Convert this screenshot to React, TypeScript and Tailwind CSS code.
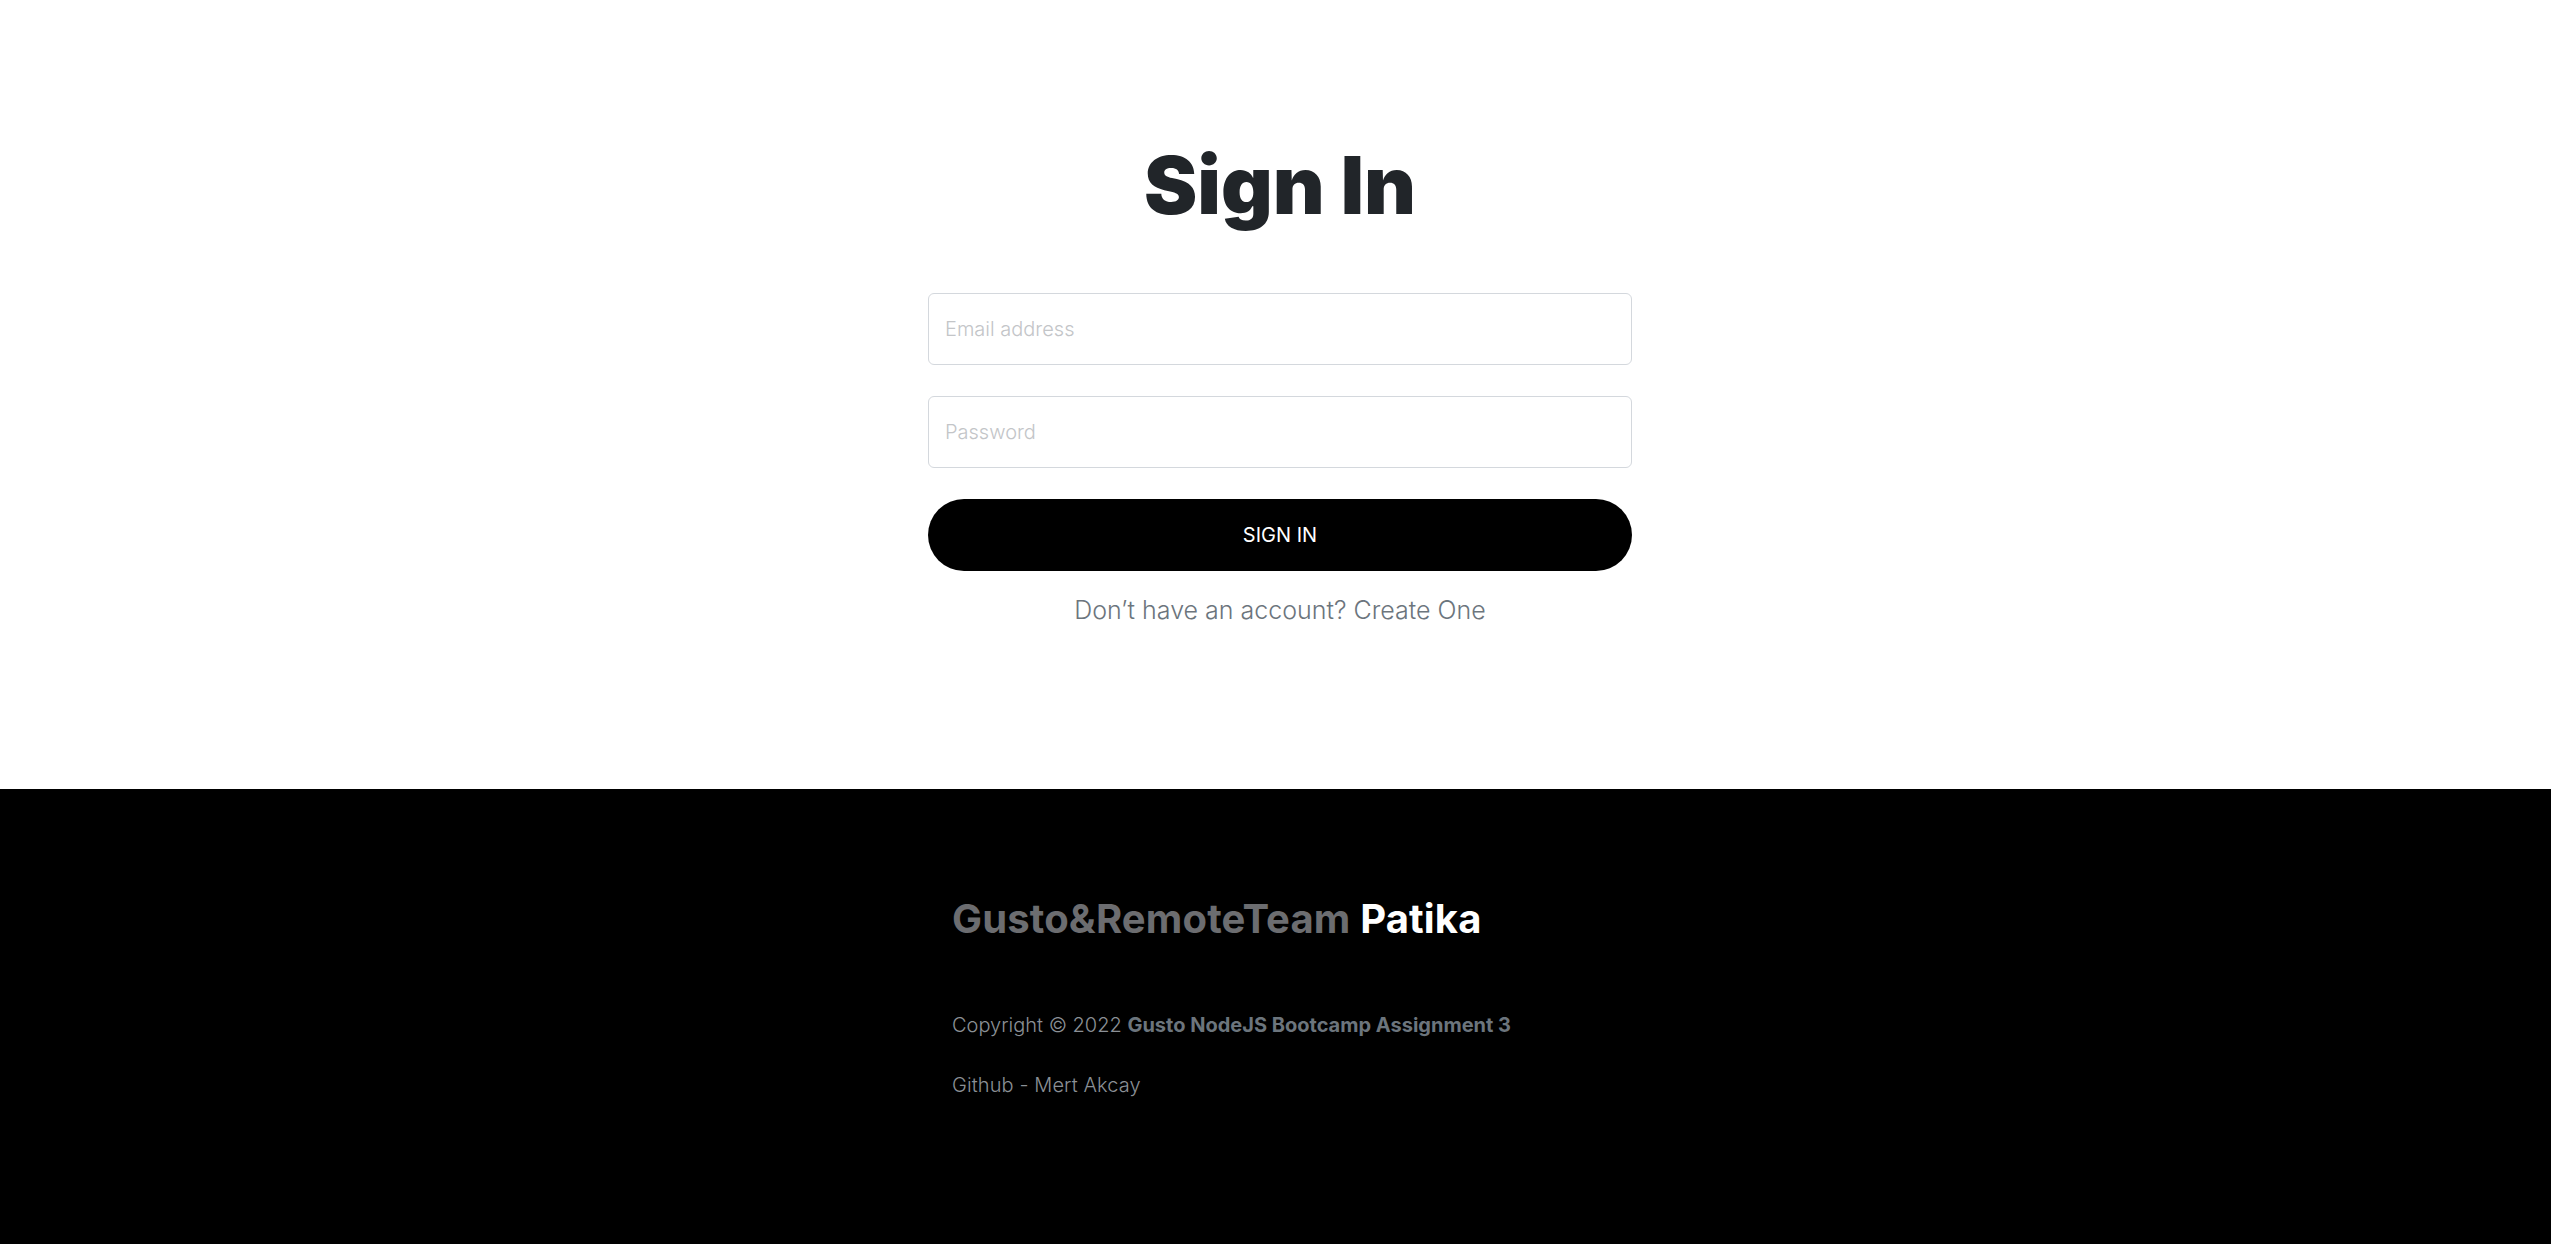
export default function App() {
  return (
    <div className="min-h-[1244px] flex flex-col bg-white" style={{ fontFamily: "Inter, 'Noto Sans', sans-serif" }}>
      <main className="h-[789px] flex justify-center pl-[9px] bg-white">
        <div className="w-[704px] flex flex-col pt-[137px]">
          <h1 className="text-[80px] leading-[96px] font-black text-[#212529] text-center">Sign In</h1>
          <input
            type="email"
            placeholder="Email address"
            className="mt-[60px] h-[72px] w-full rounded-[6px] border border-[#d4d8dd] px-4 text-[20px] font-light text-[#212529] placeholder:text-[#c3c5c8] outline-none"
          />
          <input
            type="password"
            placeholder="Password"
            className="mt-[31px] h-[72px] w-full rounded-[6px] border border-[#d4d8dd] px-4 text-[20px] font-light text-[#212529] placeholder:text-[#c3c5c8] outline-none"
          />
          <button className="mt-[31px] h-[72px] w-full rounded-full bg-black text-white text-[20px] font-normal">SIGN IN</button>
          <p className="mt-[20px] text-center text-[25px] leading-[38px] font-light text-[#6c757d]">
            Don’t have an account? <a className="text-[#6c757d]">Create One</a>
          </p>
        </div>
      </main>
      <footer className="flex-1 bg-black flex justify-center pl-[9px]">
        <div className="w-[656px] pt-[106px]">
          <h2 className="text-[40px] leading-[48px] font-bold tracking-[0.15px] text-[#6c6d70]">
            Gusto&amp;RemoteTeam <span className="text-white">Patika</span>
          </h2>
          <p className="mt-[67px] text-[20px] leading-[30px] font-light text-[#8b9096]">
            Copyright © 2022 <span className="font-bold text-[#6c757d]">Gusto NodeJS Bootcamp Assignment 3</span>
          </p>
          <p className="mt-[30px] text-[20px] leading-[30px] font-light text-[#8b9096] tracking-[0.1px]">Github - Mert Akcay</p>
        </div>
      </footer>
    </div>
  );
}
